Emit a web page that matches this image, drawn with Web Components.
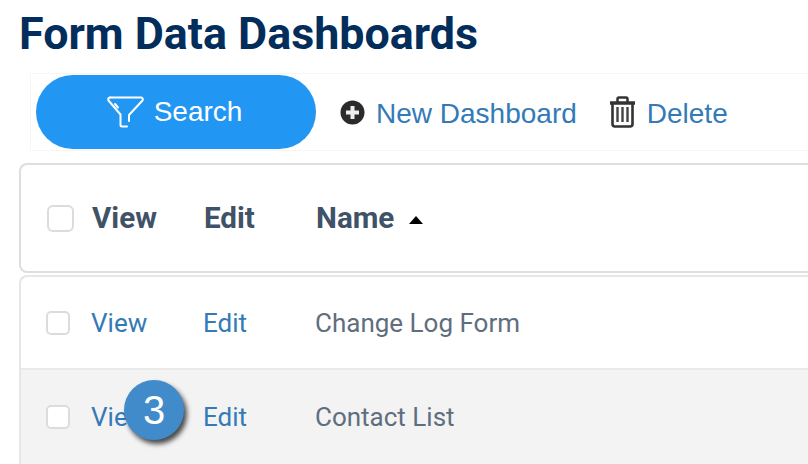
<!DOCTYPE html>
<html>
<head>
<meta charset="utf-8">
<title>Form Data Dashboards</title>
<style>
    html, body { margin: 0; padding: 0; height: 100%; overflow: hidden; background: #fff; }
    body { font-family: Roboto, "Liberation Sans", sans-serif; }
</style>
</head>
<body>
<dash-page>
    <dash-toolbar slot="toolbar"></dash-toolbar>
    <dash-header slot="header"></dash-header>
    <dash-row slot="rows" name="Change Log Form"></dash-row>
    <dash-row slot="rows" name="Contact List" shaded step="3"></dash-row>
</dash-page>

<script>
// Pagina: titel, toolbar en de tabel
class DashPage extends HTMLElement {
    constructor() {
        super();
        this.attachShadow({ mode: 'open' });
        this.shadowRoot.innerHTML = `
            <style>
                :host { display: block; height: 464px; overflow: hidden; }
                h1 {
                    margin: 0;
                    padding: 7px 0 0 19px;
                    height: 64px;
                    box-sizing: border-box;
                    font: 700 44.800px/53px Roboto, sans-serif;
                    color: #032d5a;
                }
                .rows {
                    margin: 2px 0 0 19px;
                    border: 2px solid #e6e6e6;
                    border-right: 0;
                    border-bottom: 0;
                    border-radius: 8px 0 0 0;
                }
            </style>
            <h1>Form Data Dashboards</h1>
            <slot name="toolbar"></slot>
            <slot name="header"></slot>
            <div class="rows"><slot name="rows"></slot></div>
        `;
    }
}

class DashToolbar extends HTMLElement {
    constructor() {
        super();
        this.attachShadow({ mode: 'open' });
        this.shadowRoot.innerHTML = `
            <style>
                :host {
                    display: flex;
                    align-items: center;
                    height: 78px;
                    box-sizing: border-box;
                    margin: 9px 0 0 30px;
                    padding-left: 5px;
                    border: 1px solid #f6f6f6;
                    border-right: 0;
                    font-family: "Liberation Sans", Arial, sans-serif;
                }
                .search {
                    display: flex;
                    align-items: center;
                    justify-content: center;
                    gap: 10px;
                    width: 277px;
                    padding-right: 3px;
                    height: 74px;
                    border-radius: 37px;
                    background: #2196f3;
                    color: #fff;
                    font-size: 28px;
                }
                a {
                    display: flex;
                    align-items: center;
                    color: #337ab7;
                    font-size: 28px;
                    padding-top: 4px;
                    text-decoration: none;
                }
                a svg { margin-top: -4px; }
                .new { margin-left: 24px; gap: 11px; }
                .del { margin-left: 32px; gap: 11px; }
                svg { display: block; }
            </style>
            <div class="search">
                <svg width="37" height="32" viewBox="0 0 37 32" fill="none" stroke="#fff" stroke-width="2" stroke-linejoin="round" stroke-linecap="round">
                    <path d="M3 1.500Q.5 2 1.500 4.500L13.500 18.500V29Q13.500 30.500 15 30.500H20"/>
                    <path d="M3 1.500H34Q36.500 2 35.500 4.500L22 19V25"/>
                    <path d="M8 8L11 11.500"/>
                </svg>
                <span>Search</span>
            </div>
            <a class="new" href="#">
                <svg width="25" height="25" viewBox="0 0 25 25">
                    <circle cx="12.500" cy="12.500" r="12" fill="#2b2b2b"/>
                    <path d="M12.500 6v13M6 12.500h13" stroke="#eee" stroke-width="4"/>
                </svg>
                <span>New Dashboard</span>
            </a>
            <a class="del" href="#">
                <svg width="27" height="32" viewBox="0 0 27 32" fill="none" stroke="#333">
                    <path d="M1 7H26" stroke-width="3.500"/>
                    <path d="M8.500 6V3Q8.500 1.500 10 1.500H17Q18.500 1.500 18.500 3V6" stroke-width="2.500"/>
                    <path d="M3.500 8V28Q3.500 30.500 6 30.500H21Q23.500 30.500 23.500 28V8" stroke-width="2.600"/>
                    <path d="M8.500 11V26M13.500 11V26M18.500 11V26" stroke="#444" stroke-width="2.400"/>
                </svg>
                <span>Delete</span>
            </a>
        `;
    }
}

// Kolommen staan in header en rijen op dezelfde plek
const columnStyle = `
    .check {
        box-sizing: border-box;
        background: #fff;
        border: 2px solid #dcdcdc;
    }
    .cell { display: flex; align-items: center; }
`;

class DashHeader extends HTMLElement {
    constructor() {
        super();
        this.attachShadow({ mode: 'open' });
        this.shadowRoot.innerHTML = `
            <style>
                :host {
                    display: grid;
                    grid-template-columns: 71px 112px 112px 1fr;
                    align-items: center;
                    height: 110px;
                    box-sizing: border-box;
                    margin: 12px 0 0 19px;
                    border: 2px solid #dedede;
                    border-right: 0;
                    border-radius: 8px 0 0 8px;
                    font: 700 29.600px Roboto, sans-serif;
                    color: #3f5268;
                }
                ${columnStyle}
                .check {
                    width: 27px;
                    height: 27px;
                    margin-left: 26px;
                    border-radius: 6px;
                }
                .name { gap: 15px; }
                .arrow {
                    width: 0;
                    height: 0;
                    margin-top: 3px;
                    border-left: 7px solid transparent;
                    border-right: 7px solid transparent;
                    border-bottom: 8px solid #000;
                }
            </style>
            <div class="check"></div>
            <div class="cell">View</div>
            <div class="cell">Edit</div>
            <div class="cell name">Name <span class="arrow"></span></div>
        `;
    }
}

class DashRow extends HTMLElement {
    constructor() {
        super();
        this.attachShadow({ mode: 'open' });
        const name = this.getAttribute('name');
        const step = this.getAttribute('step');
        this.shadowRoot.innerHTML = `
            <style>
                :host {
                    display: grid;
                    grid-template-columns: 70px 112px 112px 1fr;
                    align-items: center;
                    height: 93px;
                    box-sizing: border-box;
                    position: relative;
                    border-bottom: 2px solid #e9e9e9;
                    font: 400 26px Roboto, sans-serif;
                    color: #5f6e7e;
                }
                :host([shaded]) { background: #f3f3f3; height: 95px; border-bottom-width: 1px; }
                ${columnStyle}
                .check {
                    width: 24px;
                    height: 24px;
                    margin-left: 25px;
                    border-radius: 5px;
                }
                a { color: #337ab7; text-decoration: none; }
                .badge {
                    position: absolute;
                    left: 103px;
                    top: 10px;
                    width: 60px;
                    height: 60px;
                    border-radius: 50%;
                    background: #428bca;
                    box-shadow: 3px 4px 5px rgba(0, 0, 0, .7);
                    color: #fff;
                    font: 400 40px/60px "Liberation Sans", Arial, sans-serif;
                    text-align: center;
                }
            </style>
            <div class="check"></div>
            <div class="cell"><a href="#">View</a></div>
            <div class="cell"><a href="#">Edit</a></div>
            <div class="cell">${name}</div>
            ${step ? `<div class="badge">${step}</div>` : ''}
        `;
    }
}

customElements.define('dash-page', DashPage);
customElements.define('dash-toolbar', DashToolbar);
customElements.define('dash-header', DashHeader);
customElements.define('dash-row', DashRow);
</script>
</body>
</html>
